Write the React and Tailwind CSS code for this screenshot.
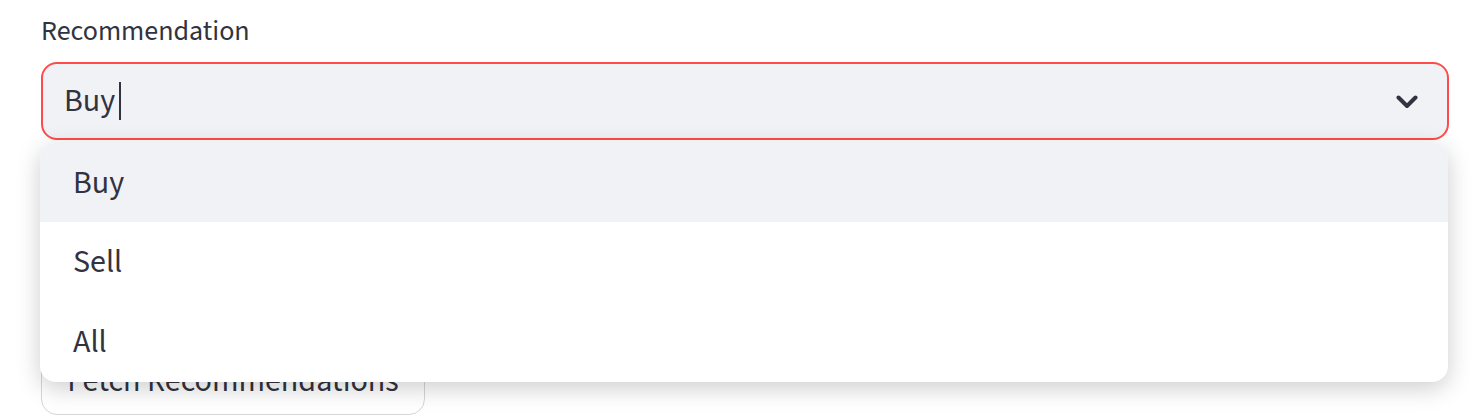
export default function App() {
  const font = { fontFamily: '"Source Sans Pro", "Source Sans 3", Lato, "Noto Sans", sans-serif' };
  return (
    <div
      className="relative w-[1482px] h-[416px] overflow-hidden bg-white text-[#31333f] pl-[41px]"
      style={font}
    >
      <div className="pt-[14px] h-[62px] text-[28px] leading-[34px]">Recommendation</div>
      <div className="w-[1408px] h-[78px] rounded-[16px] border-2 border-[#ff4b4b] bg-[#f0f2f6] flex items-center pl-[21px] pr-[29px]">
        <span className="text-[32px] leading-[40px]">Buy</span>
        <span className="ml-[4px] w-[2px] h-[38px] bg-[#31333f]" />
        <div className="flex-1" />
        <svg width="22" height="14" viewBox="0 0 22 14" className="mt-[2px]">
          <path d="M2.5 2.5 L11 11 L19.5 2.5" fill="none" stroke="#31333f" strokeWidth="4" strokeLinecap="round" strokeLinejoin="round" />
        </svg>
      </div>
      <div className="mt-[197px] w-[384px] h-[78px] rounded-[16px] border border-[#d5d6da] bg-white flex items-end justify-center pb-[13px] text-[32px] leading-[40px]">
        Fetch Recommendations
      </div>
      <div className="absolute left-[40px] top-[143px] w-[1408px] rounded-[16px] bg-white overflow-hidden shadow-[0_6px_24px_rgba(0,0,0,0.2)]">
        <div className="h-[79px] bg-[#f0f2f6] flex items-center pl-[33px] text-[32px] leading-[40px]">Buy</div>
        <div className="h-[80px] flex items-center pl-[33px] text-[32px] leading-[40px]">Sell</div>
        <div className="h-[80px] flex items-center pl-[33px] text-[32px] leading-[40px]">All</div>
      </div>
    </div>
  );
}
